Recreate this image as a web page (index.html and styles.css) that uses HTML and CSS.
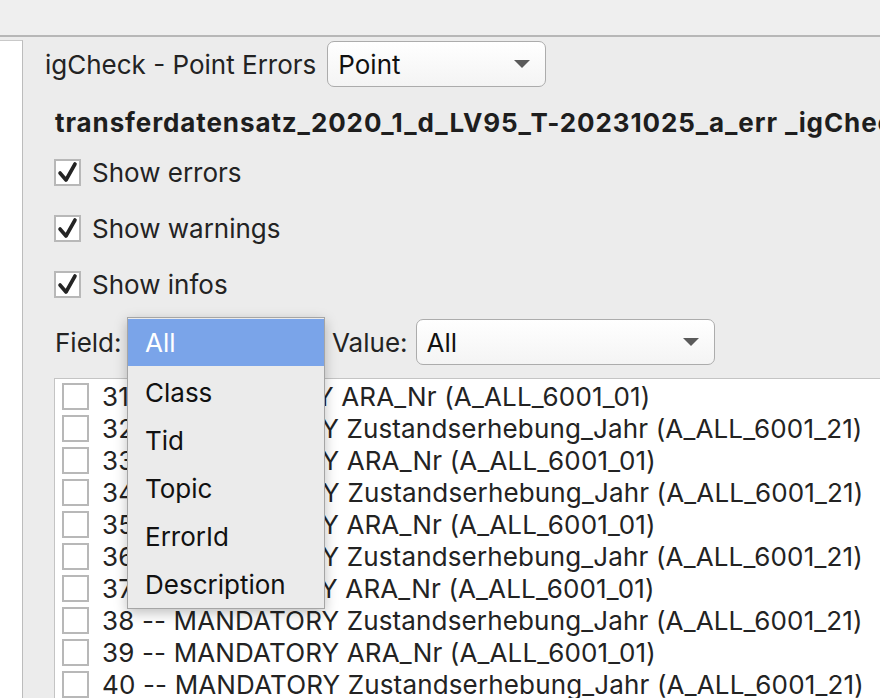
FILE: index.html
```html
<!DOCTYPE html>
<html>
<head>
<meta charset="utf-8">
<link rel="stylesheet" href="styles.css">
</head>
<body>
<div class="toolbar"></div>
<div class="main">
  <div class="sidebar"></div>
  <div class="content">
    <div class="row title-row">
      <span class="title">igCheck - Point Errors</span>
      <div class="combo combo-point"><span>Point</span><i class="arrow"></i></div>
    </div>
    <div class="row file-row">
      <span class="filename">transferdatensatz_2020_1_d_LV95_T-20231025_a_err _igCheck.xtf</span>
    </div>
    <div class="row check-row">
      <span class="cb checked"><svg viewBox="0 0 27 27" width="27" height="27"><path d="M6 14 L12 21 L21 5" fill="none" stroke="#242424" stroke-width="3.6" stroke-linecap="round" stroke-linejoin="round"/></svg></span>
      <span class="label">Show errors</span>
    </div>
    <div class="row check-row">
      <span class="cb checked"><svg viewBox="0 0 27 27" width="27" height="27"><path d="M6 14 L12 21 L21 5" fill="none" stroke="#242424" stroke-width="3.6" stroke-linecap="round" stroke-linejoin="round"/></svg></span>
      <span class="label">Show warnings</span>
    </div>
    <div class="row check-row">
      <span class="cb checked"><svg viewBox="0 0 27 27" width="27" height="27"><path d="M6 14 L12 21 L21 5" fill="none" stroke="#242424" stroke-width="3.6" stroke-linecap="round" stroke-linejoin="round"/></svg></span>
      <span class="label">Show infos</span>
    </div>
    <div class="row filter-row">
      <span class="field-label">Field:</span>
      <div class="combo combo-field"><span>All</span><i class="arrow"></i></div>
      <span class="value-label">Value:</span>
      <div class="combo combo-value"><span>All</span><i class="arrow"></i></div>
    </div>
    <div class="list">
      <div class="item"><span class="cb"></span><span>31 -- MANDATORY ARA_Nr (A_ALL_6001_01)</span></div>
      <div class="item"><span class="cb"></span><span>32 -- MANDATORY Zustandserhebung_Jahr (A_ALL_6001_21)</span></div>
      <div class="item"><span class="cb"></span><span>33 -- MANDATORY ARA_Nr (A_ALL_6001_01)</span></div>
      <div class="item"><span class="cb"></span><span>34 -- MANDATORY Zustandserhebung_Jahr (A_ALL_6001_21)</span></div>
      <div class="item"><span class="cb"></span><span>35 -- MANDATORY ARA_Nr (A_ALL_6001_01)</span></div>
      <div class="item"><span class="cb"></span><span>36 -- MANDATORY Zustandserhebung_Jahr (A_ALL_6001_21)</span></div>
      <div class="item"><span class="cb"></span><span>37 -- MANDATORY ARA_Nr (A_ALL_6001_01)</span></div>
      <div class="item"><span class="cb"></span><span>38 -- MANDATORY Zustandserhebung_Jahr (A_ALL_6001_21)</span></div>
      <div class="item"><span class="cb"></span><span>39 -- MANDATORY ARA_Nr (A_ALL_6001_01)</span></div>
      <div class="item"><span class="cb"></span><span>40 -- MANDATORY Zustandserhebung_Jahr (A_ALL_6001_21)</span></div>
    </div>
    <ul class="popup">
      <li class="selected">All</li>
      <li>Class</li>
      <li>Tid</li>
      <li>Topic</li>
      <li>ErrorId</li>
      <li>Description</li>
    </ul>
  </div>
</div>
</body>
</html>
```

FILE: styles.css
```css
* { box-sizing: border-box; }
html, body {
  margin: 0;
  padding: 0;
  width: 880px;
  height: 698px;
  overflow: hidden;
  background: #ececec;
  font-family: Inter, "Liberation Sans", sans-serif;
  font-size: 26px;
  color: #232323;
}
.toolbar {
  height: 37px;
  background: #efefef;
  border-bottom: 2px solid #b7b7b7;
}
.main {
  display: flex;
  height: 661px;
}
.sidebar {
  width: 23px;
  margin-top: 3px;
  background: #ffffff;
  border-top: 1px solid #c9c9c9;
  border-right: 1px solid #bcbcbc;
  flex: none;
}
.content {
  position: relative;
  flex: 1;
  padding-left: 31px;
  padding-top: 1px;
  min-width: 0;
}
.row {
  display: flex;
  align-items: center;
}
.title-row {
  height: 52px;
  margin-left: -9px;
}
.title {
  margin-right: 11px;
}
.combo {
  position: relative;
  height: 46px;
  border: 1.5px solid #acacac;
  border-radius: 7px;
  background: linear-gradient(#ffffff, #f4f4f4);
  display: flex;
  align-items: center;
  padding-left: 10px;
  color: #111;
}
.combo-point { width: 219px; }
.arrow {
  position: absolute;
  right: 15px;
  top: 50%;
  margin-top: -4px;
  width: 0;
  height: 0;
  border-left: 8px solid transparent;
  border-right: 8px solid transparent;
  border-top: 8px solid #5a5a5a;
}
.file-row {
  margin-top: 10px;
  height: 44px;
  white-space: nowrap;
  overflow: hidden;
  padding-left: 1px;
}
.filename {
  font-weight: 700;
  color: #1e1e1e;
  letter-spacing: 0.9px;
}
.check-row {
  height: 56px;
}
.cb {
  flex: none;
  width: 27px;
  height: 27px;
  border: 2px solid #b8b8b8;
  background: #ffffff;
  display: inline-flex;
  position: relative;
}
.cb svg {
  position: absolute;
  left: -2px;
  top: -2px;
}
.label {
  margin-left: 11px;
}
.filter-row {
  height: 60px;
}
.field-label {
  padding-left: 1px;
  width: 73px;
}
.combo-field {
  width: 198px;
}
.value-label {
  margin-left: 7px;
  margin-right: 8px;
}
.combo-value {
  width: 299px;
}
.list {
  margin-top: 6px;
  margin-right: -10px;
  background: #ffffff;
  border-top: 1px solid #c4c4c4;
  border-left: 1px solid #c4c4c4;
  height: 330px;
  padding-top: 1px;
  white-space: nowrap;
  overflow: hidden;
  letter-spacing: 0.15px;
}
.item {
  height: 32px;
  display: flex;
  align-items: center;
  padding-left: 7px;
}
.item .cb {
  margin-right: 13px;
}
.popup {
  position: absolute;
  left: 104px;
  top: 280px;
  width: 198px;
  margin: 0;
  padding: 1px 0 2px 0;
  list-style: none;
  background: #ebebeb;
  border: 1.5px solid #a5a5a5;
  box-shadow: 0 4px 12px rgba(0, 0, 0, 0.25);
  color: #111;
}
.popup li {
  height: 48px;
  display: flex;
  align-items: center;
  padding-left: 17px;
  padding-top: 4px;
}
.popup li.selected {
  background: #7aa4e9;
  color: #ffffff;
  height: 47px;
  padding-top: 0;
}
```
